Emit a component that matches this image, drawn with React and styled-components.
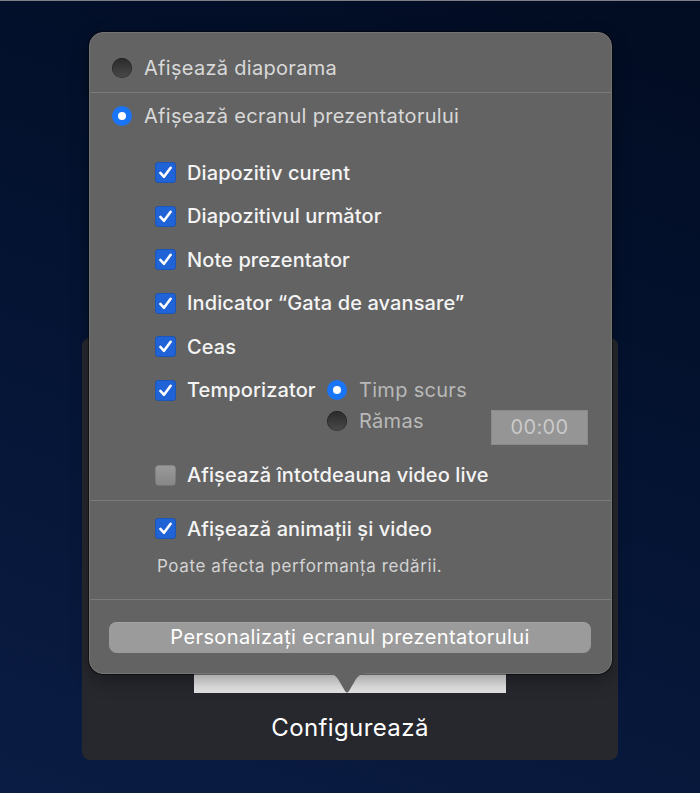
import React from 'react';
import styled, { createGlobalStyle } from 'styled-components';

const GlobalStyle = createGlobalStyle`
  html, body {
    margin: 0;
    padding: 0;
  }
  body {
    width: 700px;
    height: 793px;
    overflow: hidden;
    font-family: Inter, "Open Sans", "Liberation Sans", sans-serif;
    background: linear-gradient(200deg, #020c22 0%, #041331 45%, #0b1c44 100%);
    border-top: 1px solid #7c7f86;
    box-sizing: border-box;
  }
`;

const Stage = styled.div`
  position: relative;
  width: 700px;
  height: 792px;
  padding: 337px 0 0 82px;
  box-sizing: border-box;
`;

const Card = styled.section`
  width: 536px;
  height: 422px;
  border-radius: 8px;
  background: #26282e;
  display: flex;
  flex-direction: column;
  align-items: center;
  padding-top: 200px;
  box-sizing: border-box;
`;

const Thumb = styled.div`
  width: 312px;
  height: 155px;
  align-self: flex-start;
  margin-left: 112px;
  background: linear-gradient(#fafafa, #e4e4e4);
`;

const CardLabel = styled.div`
  margin-top: 20px;
  font-size: 24px;
  line-height: 30px;
  color: #ffffff;
  letter-spacing: 0.4px;
`;

const Popover = styled.div`
  position: absolute;
  left: 89px;
  top: 31px;
  width: 523px;
  height: 642px;
  box-sizing: border-box;
  background: #636363;
  border-radius: 14px;
  border: 1px solid #757575;
  box-shadow: 0 0 0 1px rgba(0, 0, 0, 0.45), 0 6px 18px rgba(0, 0, 0, 0.35);
  display: flex;
  flex-direction: column;
`;

const Arrow = styled.svg`
  position: absolute;
  left: 234px;
  bottom: -21px;
  width: 46px;
  height: 22px;
`;

const Section = styled.div`
  display: flex;
  flex-direction: column;
  padding: ${(p) => p.$pad || '0'};
  border-top: ${(p) => (p.$lineTop ? '1px solid #7b7b7b' : 'none')};
  border-bottom: ${(p) => (p.$divider ? '1px solid #7b7b7b' : 'none')};
  margin-top: ${(p) => p.$top || 0}px;
`;

const RadioRow = styled.label`
  display: flex;
  align-items: center;
  height: ${(p) => p.$h ?? 36}px;
  gap: 12px;
  padding-left: ${(p) => p.$indent ?? 22}px;
  font-size: 20px;
  color: ${(p) => p.$color || '#d9d9d9'};
  letter-spacing: 0.3px;
`;

const RadioDot = styled.span`
  width: 20px;
  height: 20px;
  border-radius: 50%;
  flex: none;
  box-sizing: border-box;
  display: flex;
  align-items: center;
  justify-content: center;
  background: ${(p) => (p.$on ? '#1a74f6' : 'linear-gradient(#2a2a2a, #494949)')};
  box-shadow: ${(p) => (p.$on ? 'none' : 'inset 0 0 0 0.5px rgba(0,0,0,0.5)')};

  &::after {
    content: '';
    display: ${(p) => (p.$on ? 'block' : 'none')};
    width: 8px;
    height: 8px;
    border-radius: 50%;
    background: #ffffff;
  }
`;

const List = styled.div`
  display: flex;
  flex-direction: column;
  margin-top: ${(p) => p.$top || 0}px;
`;

const CheckRow = styled.label`
  display: flex;
  align-items: center;
  height: 43.5px;
  padding-left: 65px;
  gap: 11px;
  font-size: 20px;
  font-weight: 500;
  color: #f4f4f4;
  letter-spacing: 0.1px;
  width: ${(p) => p.$w || 'auto'};
  box-sizing: border-box;
  flex: none;
`;

const Box = styled.span`
  width: 21px;
  height: 21px;
  border-radius: 4px;
  flex: none;
  display: flex;
  align-items: center;
  justify-content: center;
  background: ${(p) => (p.$on ? '#1f63d6' : 'linear-gradient(#9a9a9a, #868686)')};
  box-shadow: inset 0 0 0 0.5px rgba(0, 0, 0, 0.25);
`;

const TimerBlock = styled.div`
  display: flex;
  align-items: flex-start;
  height: 85px;
`;

const TimerOptions = styled.div`
  display: flex;
  flex-direction: column;
  padding-top: 6px;
  flex: 1;
`;

const OptionLine = styled.div`
  display: flex;
  align-items: flex-start;
  padding-right: 23px;
`;

const TimeField = styled.div`
  margin-left: auto;
  margin-top: 4px;
  width: 97px;
  height: 35px;
  box-sizing: border-box;
  background: #959595;
  border: 1px solid #8b8b8b;
  display: flex;
  align-items: center;
  justify-content: center;
  font-size: 20px;
  letter-spacing: 0.4px;
  color: #c9c9c9;
`;

const Note = styled.div`
  padding-left: 67px;
  margin-top: 5px;
  font-size: 17px;
  color: #d3d3d3;
  letter-spacing: 0.6px;
`;

const Button = styled.button`
  margin: 22px 20px 0 19px;
  height: 31px;
  border: none;
  border-radius: 8px;
  background: #9b9b9b;
  color: #ffffff;
  font-family: inherit;
  font-size: 20px;
  letter-spacing: 0.4px;
  padding: 0;
  box-shadow: inset 0 0.5px 0 rgba(255, 255, 255, 0.2);
`;

const Check = () => (
  <svg width="15" height="15" viewBox="0 0 14 14">
    <path d="M2.2 7.4 L5.6 11 L11.8 2.6" fill="none" stroke="#fff" strokeWidth="2.4" strokeLinecap="round" strokeLinejoin="round" />
  </svg>
);

const CheckItem = ({ on = true, children, w }) => (
  <CheckRow $w={w}>
    <Box $on={on}>{on && <Check />}</Box>
    {children}
  </CheckRow>
);

const App = () => (
  <>
    <GlobalStyle />
    <Stage>
      <Card>
        <Thumb />
        <CardLabel>Configurează</CardLabel>
      </Card>
      <Popover>
        <Section $pad="17px 0 6px" $divider>
          <RadioRow>
            <RadioDot />
            Afișează diaporama
          </RadioRow>
        </Section>
        <Section $pad="5px 0 0">
          <RadioRow>
            <RadioDot $on />
            Afișează ecranul prezentatorului
          </RadioRow>
          <List $top={17}>
            <CheckItem>Diapozitiv curent</CheckItem>
            <CheckItem>Diapozitivul următor</CheckItem>
            <CheckItem>Note prezentator</CheckItem>
            <CheckItem>Indicator “Gata de avansare”</CheckItem>
            <CheckItem>Ceas</CheckItem>
            <TimerBlock>
              <CheckItem w="237px">Temporizator</CheckItem>
              <TimerOptions>
                <RadioRow $h={31} $indent={0} $color="#b9b9b9">
                  <RadioDot $on />
                  Timp scurs
                </RadioRow>
                <OptionLine>
                  <RadioRow $h={31} $indent={0} $color="#b9b9b9">
                    <RadioDot />
                    Rămas
                  </RadioRow>
                  <TimeField>00:00</TimeField>
                </OptionLine>
              </TimerOptions>
            </TimerBlock>
            <CheckItem on={false}>Afișează întotdeauna video live</CheckItem>
          </List>
        </Section>
        <Section $pad="0 0 23px" $divider $lineTop $top={3}>
          <List $top={6}>
            <CheckItem>Afișează animații și video</CheckItem>
          </List>
          <Note>Poate afecta performanța redării.</Note>
        </Section>
        <Button>Personalizați ecranul prezentatorului</Button>
        <Arrow viewBox="0 0 46 22">
          <path d="M0 1 C8 1 10 2 14 7 L21 19 Q23 22 25 19 L32 7 C36 2 38 1 46 1 L46 0 L0 0 Z" fill="#636363" />
        </Arrow>
      </Popover>
    </Stage>
  </>
);

export default App;
